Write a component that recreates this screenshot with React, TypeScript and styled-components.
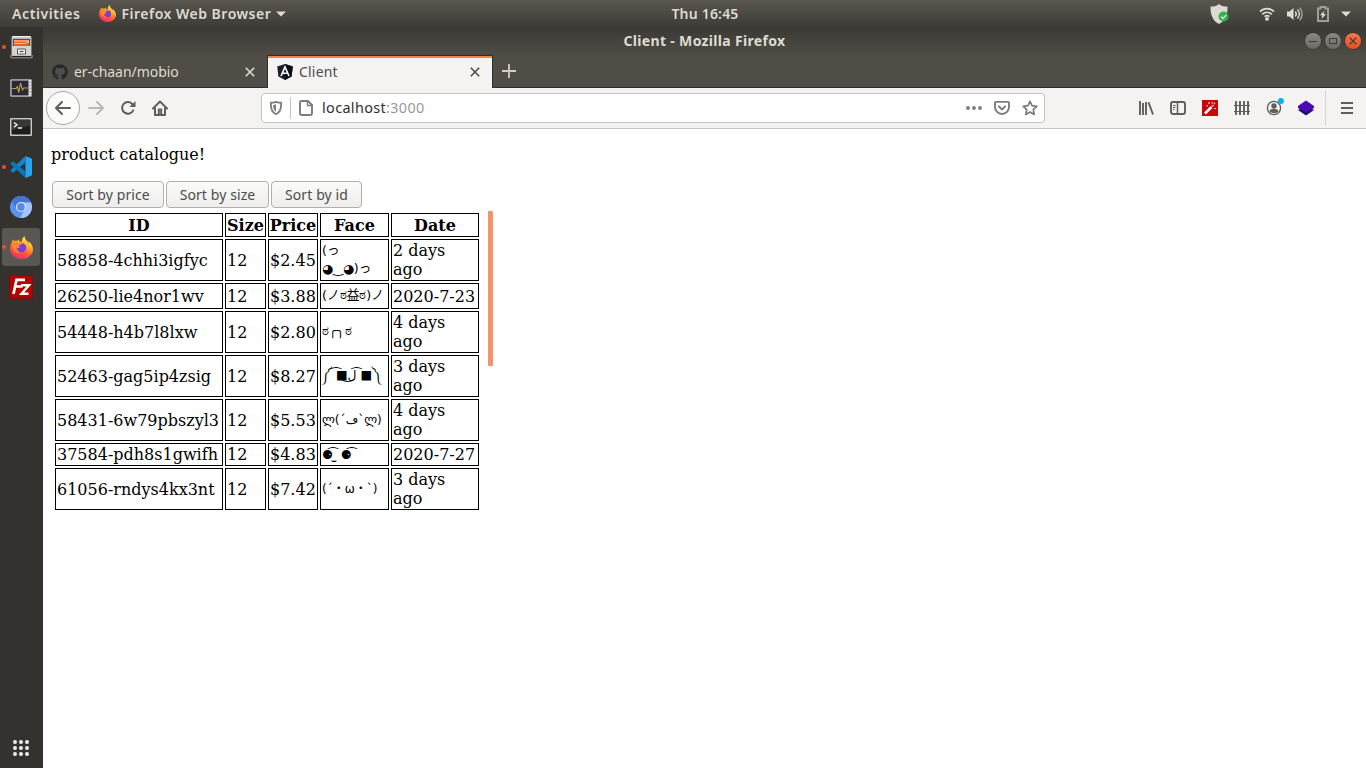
import React from 'react';
import styled, { createGlobalStyle } from 'styled-components';
import { FaGithub } from 'react-icons/fa';

const GlobalStyle = createGlobalStyle`
  *, *::before, *::after { box-sizing: border-box; }
  body { margin: 0; background: #fff; overflow: hidden; }
  svg { display: block; flex: none; }
`;

const UI = '"Noto Sans", "Open Sans", sans-serif';

const Desktop = styled.div`
  display: flex;
  flex-direction: column;
  width: 1366px;
  height: 768px;
  font-family: ${UI};
  font-size: 14px;
`;

const TopBar = styled.header`
  flex: none;
  display: grid;
  grid-template-columns: 643px 100px 1fr;
  align-items: center;
  height: 27px;
  padding: 0 15px 0 12px;
  background: linear-gradient(#59564d, #3d3c38);
  color: #dfdbd2;
`;

const BarText = styled.span<{ $track: number }>`
  font-weight: 600;
  line-height: 20px;
  letter-spacing: ${(p) => p.$track}px;
  white-space: nowrap;
`;

const AppMenu = styled.div`
  display: flex;
  align-items: center;
`;

const ActiveApp = styled.div`
  display: flex;
  align-items: center;
  gap: 5px;
  margin-left: 19px;
`;

const Clock = styled.div`
  text-align: center;
`;

const StatusArea = styled.div`
  display: flex;
  align-items: center;
  justify-content: flex-end;
`;

const StatusSlot = styled.span<{ $gap: number }>`
  margin-right: ${(p) => p.$gap}px;
`;

const Workspace = styled.div`
  flex: 1;
  display: flex;
  min-height: 0;
`;

const Dock = styled.nav`
  flex: none;
  display: flex;
  flex-direction: column;
  width: 43px;
  background: #33322e;
`;

const DockSlot = styled.div<{ $running?: boolean; $active?: boolean }>`
  display: grid;
  grid-template-columns: 4px 30px;
  align-items: center;
  justify-items: center;
  width: 38px;
  height: 38px;
  margin: 1px 0 1px 2px;
  border-radius: 3px;
  background: ${(p) => (p.$active ? '#595752' : 'transparent')};
  &::before {
    content: '';
    width: 4px;
    height: 4px;
    border-radius: 50%;
    background: ${(p) => (p.$running ? '#e95420' : 'transparent')};
  }
`;

const AppsButton = styled.div`
  display: grid;
  grid-template-columns: repeat(3, 4px);
  gap: 2px;
  margin: auto 0 12px 13px;
`;

const AppsDot = styled.span`
  width: 3.6px;
  height: 4px;
  border-radius: 50%;
  background: #eceae7;
`;

const Window = styled.main`
  flex: 1;
  display: flex;
  flex-direction: column;
  min-width: 0;
  background: #fff;
`;

const TitleBar = styled.div`
  flex: none;
  display: grid;
  grid-template-columns: 1fr 200px 1fr;
  align-items: center;
  height: 28px;
  padding-right: 5px;
  background: linear-gradient(#3a3935, #4f4c45);
  color: #dfdbd2;
`;

const WindowTitle = styled.div`
  grid-column: 2;
  padding-left: 5px;
  text-align: center;
  font-weight: 700;
  line-height: 20px;
  letter-spacing: 0.33px;
  white-space: nowrap;
`;

const WindowControls = styled.div`
  display: flex;
  justify-content: flex-end;
  gap: 4px;
`;

const WindowControl = styled.span<{ $close?: boolean }>`
  display: flex;
  align-items: center;
  justify-content: center;
  width: 16px;
  height: 16px;
  border-radius: 50%;
  color: #3c3b37;
  background: ${(p) => (p.$close ? 'linear-gradient(#f2774f, #e4501d)' : 'linear-gradient(#898781, #6c6a64)')};
  box-shadow: 0 0 0 1px rgba(45, 44, 40, 0.45);
`;

const TabStrip = styled.div`
  flex: none;
  display: flex;
  height: 33px;
  border-bottom: 1px solid #302f2b;
  background: #504d46;
`;

const Tab = styled.div<{ $active?: boolean }>`
  display: flex;
  align-items: center;
  width: ${(p) => (p.$active ? 226 : 224)}px;
  height: ${(p) => (p.$active ? 33 : 32)}px;
  padding: ${(p) => (p.$active ? '0 12px 0 9px' : '2px 12px 0 9px')};
  border: solid #302f2b;
  border-width: ${(p) => (p.$active ? '1px 1px 0 1px' : '0')};
  background: ${(p) => (p.$active ? 'linear-gradient(#f5814f 2px, #f4f3f1 2px)' : 'transparent')};
  color: ${(p) => (p.$active ? '#4c4c4c' : '#dfdbd2')};
`;

const TabTitle = styled.span<{ $track: number }>`
  flex: 1;
  margin-left: 6px;
  line-height: 20px;
  letter-spacing: ${(p) => p.$track}px;
`;

const NewTab = styled.span`
  display: flex;
  align-items: center;
  margin-left: 9px;
`;

const NavBar = styled.div`
  flex: none;
  display: flex;
  align-items: center;
  height: 41px;
  padding-left: 3px;
  border-bottom: 1px solid #c9c6c3;
  background: #f4f3f2;
  color: #5f5e5c;
`;

const BackButton = styled.span`
  display: flex;
  align-items: center;
  justify-content: center;
  width: 34px;
  height: 34px;
  border: 1px solid #aaa8a5;
  border-radius: 50%;
  background: #fcfcfb;
`;

const ToolSlot = styled.span<{ $muted?: boolean }>`
  display: flex;
  align-items: center;
  justify-content: center;
  width: 32px;
  height: 32px;
  color: ${(p) => (p.$muted ? '#b9b8b6' : 'inherit')};
`;

const AddressBar = styled.div`
  display: flex;
  align-items: center;
  width: 784px;
  height: 30px;
  margin: 0 85px;
  padding: 0 6px 0 7px;
  border: 1px solid #c6c4c1;
  border-radius: 4px;
  background: #fff;
  color: #7d7c7b;
`;

const AddressDivider = styled.span`
  width: 1px;
  height: 22px;
  margin: 0 8px 0 7px;
  background: #c6c4c1;
`;

const Address = styled.span`
  flex: 1;
  margin-left: 9px;
  color: #2e2e2e;
  font-size: 14.4px;
  line-height: 20px;
  letter-spacing: 0.36px;
`;

const Port = styled.span`
  color: #9a9998;
`;

const AddressActions = styled.span`
  display: flex;
  align-items: center;
  gap: 12px;
`;

const MenuSlot = styled.span`
  display: flex;
  align-items: center;
  justify-content: center;
  width: 41px;
  height: 34px;
  margin-left: 3px;
  padding-left: 2px;
  border-left: 1px solid #d5d3d0;
`;

const Page = styled.section`
  flex: 1;
  padding: 16px 8px 0;
  font-family: 'DejaVu Serif', 'DejaVu Sans', 'Noto Sans CJK JP', serif;
  font-size: 16px;
  line-height: 19px;
  color: #000;
`;

const Heading = styled.p`
  margin: 0 0 17px;
`;

const SortButtons = styled.div`
  display: flex;
  gap: 2px;
  margin: 0 0 3px 1px;
`;

const SortButton = styled.button<{ $width: number }>`
  width: ${(p) => p.$width}px;
  height: 27px;
  padding: 0;
  border: 1px solid #b3b0ac;
  border-radius: 4px;
  background: linear-gradient(#fbfbfa, #eeedeb);
  color: #4c4c4c;
  font: 14px/20px ${UI};
  letter-spacing: 0.1px;
`;

const Catalogue = styled.div`
  display: flex;
  align-items: flex-start;
  width: 442px;
  margin-left: 2px;
`;

const Table = styled.table`
  flex: none;
  width: 428px;
  table-layout: fixed;
  border-spacing: 2px;
  margin-right: 7px;
`;

const Row = styled.tr<{ $height: number }>`
  height: ${(p) => p.$height}px;
`;

const HeadCell = styled.th<{ $width: number }>`
  width: ${(p) => p.$width}px;
  padding: 1px 0;
  border: 1px solid #000;
`;

const Cell = styled.td`
  padding: 1px;
  border: 1px solid #000;
  white-space: pre;
`;

const Face = styled.div<{ $size: number; $lift: number }>`
  padding-bottom: ${(p) => p.$lift}px;
  font-family: 'DejaVu Sans', 'Noto Sans CJK JP', sans-serif;
  font-size: ${(p) => p.$size}px;
  line-height: 18px;
`;

const ScrollThumb = styled.div`
  width: 5px;
  height: 155px;
  border-radius: 1px;
  background: #f6926a;
`;

const FirefoxIcon = ({ size, id }: { size: number; id: string }) => (
  <svg width={size} height={size} viewBox="0 0 24 24">
    <defs>
      <linearGradient id={`${id}-body`} x1="0.8" y1="0" x2="0.3" y2="1">
        <stop offset="0" stopColor="#fff14d" />
        <stop offset="0.35" stopColor="#ffb32c" />
        <stop offset="0.65" stopColor="#ff5b36" />
        <stop offset="1" stopColor="#ef2a76" />
      </linearGradient>
      <radialGradient id={`${id}-globe`}>
        <stop offset="0" stopColor="#5b4bea" />
        <stop offset="1" stopColor="#9034c9" />
      </radialGradient>
    </defs>
    <path fill={`url(#${id}-body)`} d="M15.500 0c-.3 2.400.8 3.700 1.700 4.700 1 .7 2 1.800 2.300 2.900.2-.7.100-1.400 0-2 2.700 2.100 4.500 5.200 4.500 8.200C24 19.600 18.700 24 12 24 5.200 24 0 19.300 0 12.700c0-2.800.9-5.200 2.300-6.700V3.600c.9.3 1.600 1 2 1.700.9-.3 2.200-.4 3.200-.1.7-.9 1.600-1.500 2.700-1.800-.5.8-.7 1.500-.7 2.200.9 0 2 .4 2.700.9C12.200 3.500 13.300 1.200 15.500 0z" />
    <circle cx="12.200" cy="12.300" r="4.800" fill={`url(#${id}-globe)`} />
    <path fill="#ff8b2d" d="M2 9c2.500-2.500 5.300-3.200 8-2.200l2.600.4c-.2 1.300-1.700 2.200-3.300 2.500-.4.800 0 1.500 1.300 1.800-1.200 1.600-3 1-4.300.2.200 3 2.100 5 5 5.600-4.500 1.400-8.800-2.300-9.300-8.300z" />
  </svg>
);

const CaretIcon = () => (
  <svg width="10" height="6" viewBox="0 0 10 6"><path d="M0 .5h10L5 5.500z" fill="#dfdbd2" /></svg>
);

const ShieldStatusIcon = () => (
  <svg width="20" height="22" viewBox="0 0 20 22">
    <path d="M9 1c2.300 2 5 2.600 8.500 2.500C17.700 12 15 18 9 21 3 18 .3 12 .5 3.500 4 3.600 6.700 3 9 1z" fill="#dcdad5" />
    <circle cx="13.500" cy="13.500" r="5" fill="#35b34a" />
    <path d="M11 13.500l2 2 3.200-3.700" fill="none" stroke="#d9f3dc" strokeWidth="1.200" />
  </svg>
);

const WifiIcon = () => (
  <svg width="16" height="14" viewBox="0 0 16 14" fill="none" stroke="#dfdbd2" strokeWidth="1.700">
    <path d="M1 4.700c4-4 10-4 14 0M3.200 7.300c2.800-2.700 6.800-2.700 9.600 0M5.500 9.600c1.500-1.300 3.500-1.300 5 0" />
    <circle cx="8" cy="11.900" r="1.900" fill="#dfdbd2" stroke="none" />
  </svg>
);

const VolumeIcon = () => (
  <svg width="16" height="14" viewBox="0 0 16 14" fill="none" stroke="#dfdbd2" strokeWidth="1.400">
    <path d="M0 4.500h2.500L6.500 1v12L2.500 9.500H0z" fill="#dfdbd2" stroke="none" />
    <path d="M8.300 4.500c1.200 1.500 1.200 3.500 0 5M10.500 2.500c2.300 2.700 2.300 6.300 0 9" />
    <path d="M12.700.800c3.200 3.600 3.200 8.800 0 12.400" stroke="#a8a59d" />
  </svg>
);

const BatteryIcon = () => (
  <svg width="12" height="16" viewBox="0 0 12 16">
    <path d="M3.500 2.500V1h5v1.500H11V15H1V2.500z" fill="none" stroke="#a19f98" strokeWidth="2" />
    <path d="M7.500 4.500L3 9.200h2.500L4.500 13 9 8.300H6.500z" fill="#e5e2da" />
  </svg>
);

const FilesIcon = () => (
  <svg width="23" height="24" viewBox="0 0 23 24">
    <path d="M0 20h23v2l-1 1.500H1L0 22z" fill="#777672" />
    <path d="M2 21.500h19" stroke="#242320" />
    <rect x="1.500" y="1" width="20" height="20" rx="1.500" fill="#b7b5b1" />
    <path d="M2.500 1.700h18" stroke="#f1f0ee" strokeWidth="1.400" />
    <rect x="3" y="4" width="17" height="8" fill="#57504a" />
    <path d="M4 5h15v6H4z" fill="#e95d23" />
    <path d="M4 6h15" stroke="#f7b085" strokeWidth="1.500" />
    <path d="M4 8.500h11l2-1h2" stroke="#ffc59b" fill="none" />
    <rect x="2" y="11" width="19" height="9.500" fill="#d3d2cf" />
    <path d="M7.500 14h8v5h-8z" fill="#fff" stroke="#55534f" />
    <path d="M9.500 15.800h4v1.400h-4z" fill="#55534f" />
  </svg>
);

const MonitorIcon = () => (
  <svg width="22" height="20" viewBox="0 0 22 20">
    <rect x=".5" y="2.500" width="21" height="17" rx="1" fill="#dedddb" stroke="#9b9996" />
    <rect x="1.500" y="3.500" width="17" height="15" fill="#2c2636" />
    <path d="M2 11.500h4l1.300-2 1.500 6L10.500 6l2 7 1.300-2H18" fill="none" stroke="#b9a046" strokeWidth="1.100" />
    <path d="M20 5v12" stroke="#8e8c89" strokeDasharray="1 2" />
  </svg>
);

const TerminalIcon = () => (
  <svg width="22" height="18" viewBox="0 0 22 18">
    <rect x="0" y="0" width="22" height="18" rx="1" fill="#c9c8c5" />
    <rect x="1.500" y="1.500" width="19" height="15" fill="#1d1d1b" />
    <path d="M2 2h18v6L2 12z" fill="#373735" />
    <path d="M4 4.500l3 2.300-3 2.300M8 10h4" fill="none" stroke="#eee" strokeWidth="1.400" />
  </svg>
);

const CodeIcon = () => (
  <svg width="22" height="22" viewBox="0 0 22 22">
    <path d="M15.500 0L22 2.800v16.400L15.500 22z" fill="#27a5ef" />
    <path d="M15.500 0v6.500L3 16.800 .3 14.600z" fill="#1186cf" />
    <path d="M15.500 22v-6.500L3 5.200.3 7.400z" fill="#0879bd" />
  </svg>
);

const ChromiumIcon = () => (
  <svg width="22" height="22" viewBox="0 0 22 22">
    <circle cx="11" cy="11" r="11" fill="#5c91ed" />
    <path d="M11 0a11 11 0 0 1 10 6.500H11L6.800 12.500 1.500 5.500A11 11 0 0 1 11 0z" fill="#4675d1" />
    <path d="M11 6.500h10A11 11 0 0 1 10 22l5-8.800z" fill="#a4c4fa" />
    <circle cx="11" cy="11" r="5" fill="#e8f0ff" />
    <circle cx="11" cy="11" r="3.900" fill="#548bea" />
  </svg>
);

const FileZillaIcon = () => (
  <svg width="24" height="24" viewBox="0 0 24 24">
    <rect x=".5" y=".5" width="23" height="23" fill="#b30000" stroke="#8d0000" strokeDasharray="1 1" />
    <path d="M4.500 19L7.500 4.800H16M6 11.500h7.500" fill="none" stroke="#fff" strokeWidth="2.700" />
    <path d="M12 10.200h8l-7.500 8.500h7" fill="none" stroke="#fff" strokeWidth="2.400" />
  </svg>
);

const AngularIcon = () => (
  <svg width="16" height="16" viewBox="0 0 16 16">
    <path d="M8 0l7.800 2.600-1.200 10L8 16l-6.600-3.400L.2 2.600z" fill="#1b1f2b" />
    <path d="M8 0l7.800 2.600-1.200 10L8 16z" fill="#0b0d16" />
    <path d="M4 12L8 3l4 9M5.500 9.300h5" fill="none" stroke="#fff" strokeWidth="1.600" />
  </svg>
);

const CloseIcon = ({ size = 10 }: { size?: number }) => (
  <svg width={size} height={size} viewBox="0 0 10 10"><path d="M.8.8l8.400 8.400M9.200.8L.8 9.200" stroke="currentColor" strokeWidth="1.600" /></svg>
);

const PlusIcon = () => (
  <svg width="14" height="14" viewBox="0 0 14 14"><path d="M7 0v14M0 7h14" stroke="#d2cec5" strokeWidth="1.800" /></svg>
);

const BackIcon = () => (
  <svg width="16" height="16" viewBox="0 0 16 16" fill="none" stroke="currentColor" strokeWidth="2" strokeLinecap="round" strokeLinejoin="round">
    <path d="M15 8H1.500M7 2L1 8l6 6" />
  </svg>
);

const ForwardIcon = () => (
  <svg width="16" height="16" viewBox="0 0 16 16" fill="none" stroke="currentColor" strokeWidth="2" strokeLinecap="round" strokeLinejoin="round">
    <path d="M1 8h13.500M9 2l6 6-6 6" />
  </svg>
);

const ReloadIcon = () => (
  <svg width="16" height="16" viewBox="0 0 16 16">
    <path d="M13.200 10.300A5.800 5.800 0 1 1 12.500 4.300L13.500 5.500" fill="none" stroke="currentColor" strokeWidth="2" strokeLinecap="round" />
    <path d="M15.500 1v6h-6z" fill="currentColor" />
  </svg>
);

const HomeIcon = () => (
  <svg width="16" height="16" viewBox="0 0 16 16" fill="none" stroke="currentColor" strokeWidth="2" strokeLinecap="round" strokeLinejoin="round">
    <path d="M1 8.500l7-7 7 7M3 8v7h10V8" />
    <path d="M6.800 14V9.500h2.400V14" />
  </svg>
);

const TrackingIcon = () => (
  <svg width="14" height="16" viewBox="0 0 14 16">
    <path d="M7 1.800c1.600.6 3.300.9 5.200.9.2 5.300-.6 9.300-5.200 11.600C2.400 12 1.600 8 1.800 2.700c1.900 0 3.600-.3 5.200-.9z" fill="none" stroke="currentColor" strokeWidth="1.800" strokeLinejoin="round" />
    <path d="M7 4.300v7.500C4.800 10.300 4.100 8 4.200 5 5.200 5 6.200 4.700 7 4.300z" fill="currentColor" />
  </svg>
);

const DocumentIcon = () => (
  <svg width="14" height="16" viewBox="0 0 14 16" fill="none" stroke="currentColor" strokeLinejoin="round">
    <path d="M3 1h6l4 4v8.500a1.500 1.500 0 0 1-1.500 1.500H2.500A1.500 1.500 0 0 1 1 13.500V2.500A1.500 1.500 0 0 1 2.500 1z" strokeWidth="1.900" />
    <path d="M8.500 1.500v4h4" strokeWidth="1.400" />
  </svg>
);

const MoreIcon = () => (
  <svg width="16" height="16" viewBox="0 0 16 16" fill="currentColor">
    <circle cx="2" cy="8" r="1.900" /><circle cx="8" cy="8" r="1.900" /><circle cx="14" cy="8" r="1.900" />
  </svg>
);

const PocketIcon = () => (
  <svg width="16" height="16" viewBox="0 0 16 16" fill="none" stroke="currentColor" strokeWidth="1.900" strokeLinecap="round" strokeLinejoin="round">
    <path d="M1.900 1.900h12.200c.5 0 .9.400.9.900V7a7 7 0 0 1-14 0V2.800c0-.5.4-.9.900-.9z" />
    <path d="M4.800 6.300L8 9.500l3.200-3.200" />
  </svg>
);

const StarIcon = () => (
  <svg width="16" height="16" viewBox="0 0 16 16" fill="none" stroke="currentColor" strokeWidth="1.700" strokeLinejoin="round">
    <path d="M8 1.300l2 4.400 4.800.6-3.500 3.300.9 4.900L8 12.100l-4.200 2.400.9-4.900L1.200 6.300 6 5.700z" />
  </svg>
);

const LibraryIcon = () => (
  <svg width="16" height="16" viewBox="0 0 16 16" fill="none" stroke="currentColor" strokeWidth="1.900">
    <path d="M2 1v14M5 3v12M8 2v13M10.500 2.300L15 14.500" />
  </svg>
);

const SidebarIcon = () => (
  <svg width="16" height="16" viewBox="0 0 16 16" fill="none" stroke="currentColor">
    <rect x="1" y="2" width="14" height="12" rx="2" strokeWidth="1.900" />
    <path d="M7.500 2v12" strokeWidth="1.500" />
    <path d="M3 5.500h2.500M3 7.500h2.500M3 9.500h1.500" />
  </svg>
);

const WandIcon = () => (
  <svg width="16" height="16" viewBox="0 0 16 16">
    <rect width="16" height="16" fill="#c60808" />
    <path d="M3 13.500L9.500 7" stroke="#fff" strokeWidth="2.500" />
    <path d="M10 6.500l1.500-1.500M7 2v2M12 8.500h2M4.500 5.500l1.500.5M10.500 2l-.5 1.500M13 3l-1 1" stroke="#fbd5d5" strokeWidth="1.200" />
  </svg>
);

const FenceIcon = () => (
  <svg width="16" height="14" viewBox="0 0 16 14" fill="none" stroke="currentColor">
    <path d="M2 0v14M6 0v14M10 0v14M14 0v14" strokeWidth="1.900" />
    <path d="M0 4.500h16M0 10.500h16" strokeWidth="1" />
  </svg>
);

const AccountIcon = () => (
  <svg width="20" height="22" viewBox="0 0 20 22">
    <circle cx="10" cy="11" r="6.600" fill="none" stroke="currentColor" strokeWidth="1.300" />
    <circle cx="10" cy="9" r="2.700" fill="currentColor" />
    <path d="M5.500 14.200c.5-1.900 2-2.200 4.500-2.200s4 .3 4.500 2.200A5.400 5.400 0 0 1 10 16.200a5.400 5.400 0 0 1-4.500-2z" fill="currentColor" />
    <circle cx="16.900" cy="4" r="3" fill="#00b0ff" />
  </svg>
);

const LayersIcon = () => (
  <svg width="16" height="16" viewBox="0 0 16 16">
    <path d="M0 10l8-4 8 4-8 5.500z" fill="#1c0a7a" />
    <path d="M0 6l8-5.500L16 6v2l-8 4.500L0 8z" fill="#4a0cb0" />
  </svg>
);

const MenuIcon = () => (
  <svg width="12" height="12" viewBox="0 0 12 12"><path d="M0 1h12M0 6h12M0 11h12" stroke="currentColor" strokeWidth="2" /></svg>
);

const MinimizeGlyph = () => (
  <svg width="8" height="8" viewBox="0 0 8 8"><path d="M0 4.500h8" stroke="currentColor" /></svg>
);

const MaximizeGlyph = () => (
  <svg width="8" height="6" viewBox="0 0 8 6"><rect x=".5" y=".5" width="7" height="5" fill="none" stroke="currentColor" /></svg>
);

const dockApps = [
  { key: 'files', icon: <FilesIcon />, running: true },
  { key: 'monitor', icon: <MonitorIcon /> },
  { key: 'terminal', icon: <TerminalIcon /> },
  { key: 'code', icon: <CodeIcon />, running: true },
  { key: 'chromium', icon: <ChromiumIcon /> },
  { key: 'firefox', icon: <FirefoxIcon size={23} id="dock" />, running: true, active: true },
  { key: 'filezilla', icon: <FileZillaIcon /> },
];

const columns = [
  { label: 'ID', width: 168 },
  { label: 'Size', width: 41 },
  { label: 'Price', width: 50 },
  { label: 'Face', width: 69 },
  { label: 'Date', width: 88 },
];

const products = [
  { id: '58858-4chhi3igfyc', price: '$2.45', face: '(っ\n◕‿◕)っ', size: 12.5, lift: 0, date: '2 days\nago', height: 42 },
  { id: '26250-lie4nor1wv', price: '$3.88', face: '(ノಠ益ಠ)ノ', size: 12.7, lift: 3, date: '2020-7-23', height: 26 },
  { id: '54448-h4b7l8lxw', price: '$2.80', face: 'ಠ╭╮ಠ', size: 13, lift: 2, date: '4 days\nago', height: 42 },
  { id: '52463-gag5ip4zsig', price: '$8.27', face: '༼ ͡■ل͜ ͡■༽', size: 12.3, lift: 3, date: '3 days\nago', height: 42 },
  { id: '58431-6w79pbszyl3', price: '$5.53', face: 'ლ(´ڡ`ლ)', size: 12.1, lift: 0, date: '4 days\nago', height: 42 },
  { id: '37584-pdh8s1gwifh', price: '$4.83', face: '⚈͡ ̫ ⚈͡', size: 12.3, lift: 0, date: '2020-7-27', height: 23 },
  { id: '61056-rndys4kx3nt', price: '$7.42', face: '(´・ω・`)', size: 12, lift: 0, date: '3 days\nago', height: 42 },
];

export default function App() {
  return (
    <Desktop>
      <GlobalStyle />
      <TopBar>
        <AppMenu>
          <BarText $track={0.6}>Activities</BarText>
          <ActiveApp>
            <FirefoxIcon size={17} id="bar" />
            <BarText $track={0.5}>Firefox Web Browser</BarText>
            <CaretIcon />
          </ActiveApp>
        </AppMenu>
        <Clock><BarText $track={0.2}>Thu 16:45</BarText></Clock>
        <StatusArea>
          <StatusSlot $gap={29}><ShieldStatusIcon /></StatusSlot>
          <StatusSlot $gap={12}><WifiIcon /></StatusSlot>
          <StatusSlot $gap={14}><VolumeIcon /></StatusSlot>
          <StatusSlot $gap={12}><BatteryIcon /></StatusSlot>
          <CaretIcon />
        </StatusArea>
      </TopBar>

      <Workspace>
        <Dock>
          {dockApps.map((app) => (
            <DockSlot key={app.key} $running={app.running} $active={app.active}>{app.icon}</DockSlot>
          ))}
          <AppsButton>
            {Array.from({ length: 9 }, (_, i) => <AppsDot key={i} />)}
          </AppsButton>
        </Dock>

        <Window>
          <TitleBar>
            <WindowTitle>Client - Mozilla Firefox</WindowTitle>
            <WindowControls>
              <WindowControl><MinimizeGlyph /></WindowControl>
              <WindowControl><MaximizeGlyph /></WindowControl>
              <WindowControl $close><CloseIcon size={8} /></WindowControl>
            </WindowControls>
          </TitleBar>

          <TabStrip>
            <Tab>
              <FaGithub size={16} color="#24292e" />
              <TabTitle $track={-0.05}>er-chaan/mobio</TabTitle>
              <CloseIcon />
            </Tab>
            <Tab $active>
              <AngularIcon />
              <TabTitle $track={0.2}>Client</TabTitle>
              <CloseIcon />
            </Tab>
            <NewTab><PlusIcon /></NewTab>
          </TabStrip>

          <NavBar>
            <BackButton><BackIcon /></BackButton>
            <ToolSlot $muted><ForwardIcon /></ToolSlot>
            <ToolSlot><ReloadIcon /></ToolSlot>
            <ToolSlot><HomeIcon /></ToolSlot>
            <AddressBar>
              <TrackingIcon />
              <AddressDivider />
              <DocumentIcon />
              <Address>localhost<Port>:3000</Port></Address>
              <AddressActions>
                <MoreIcon />
                <PocketIcon />
                <StarIcon />
              </AddressActions>
            </AddressBar>
            <ToolSlot><LibraryIcon /></ToolSlot>
            <ToolSlot><SidebarIcon /></ToolSlot>
            <ToolSlot><WandIcon /></ToolSlot>
            <ToolSlot><FenceIcon /></ToolSlot>
            <ToolSlot><AccountIcon /></ToolSlot>
            <ToolSlot><LayersIcon /></ToolSlot>
            <MenuSlot><MenuIcon /></MenuSlot>
          </NavBar>

          <Page>
            <Heading>product catalogue!</Heading>
            <SortButtons>
              <SortButton $width={112}>Sort by price</SortButton>
              <SortButton $width={103}>Sort by size</SortButton>
              <SortButton $width={91}>Sort by id</SortButton>
            </SortButtons>
            <Catalogue>
              <Table>
                <thead>
                  <Row $height={24}>
                    {columns.map((c) => <HeadCell key={c.label} $width={c.width}>{c.label}</HeadCell>)}
                  </Row>
                </thead>
                <tbody>
                  {products.map((p) => (
                    <Row key={p.id} $height={p.height}>
                      <Cell>{p.id}</Cell>
                      <Cell>12</Cell>
                      <Cell>{p.price}</Cell>
                      <Cell><Face $size={p.size} $lift={p.lift}>{p.face}</Face></Cell>
                      <Cell>{p.date}</Cell>
                    </Row>
                  ))}
                </tbody>
              </Table>
              <ScrollThumb />
            </Catalogue>
          </Page>
        </Window>
      </Workspace>
    </Desktop>
  );
}
